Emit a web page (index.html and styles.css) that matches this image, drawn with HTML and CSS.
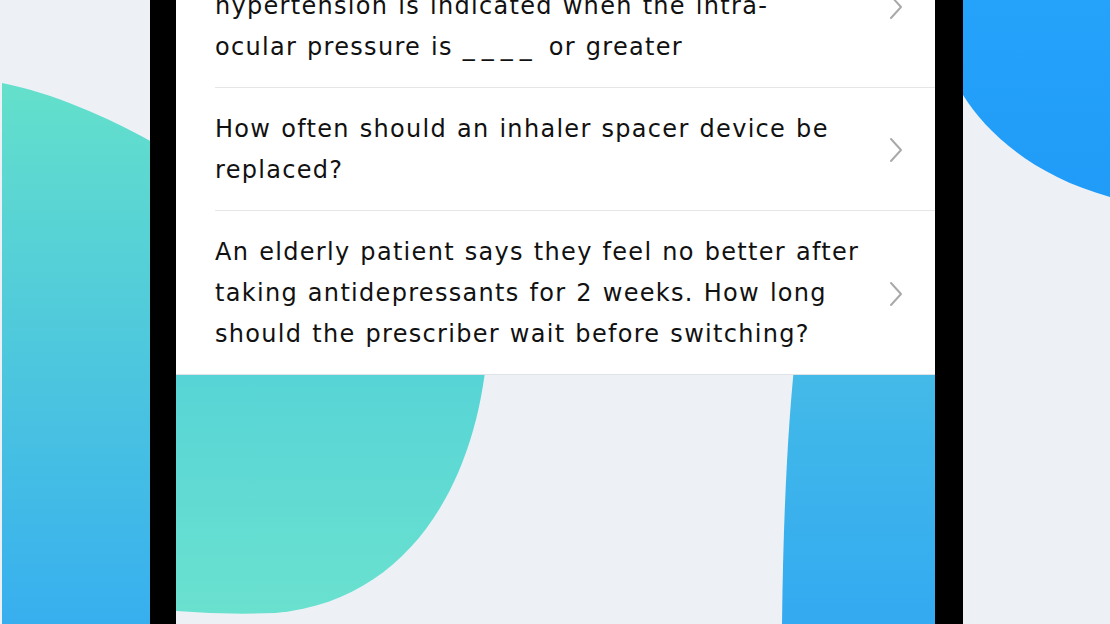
FILE: index.html
```html
<!DOCTYPE html>
<html lang="en">
<head>
<meta charset="utf-8">
<title>Questions</title>
<link rel="stylesheet" href="styles.css">
</head>
<body>
<div class="stage">
  <svg class="backdrop" viewBox="0 0 1110 624" preserveAspectRatio="none" aria-hidden="true">
    <defs>
      <linearGradient id="gLeft" x1="0" y1="83" x2="0" y2="624" gradientUnits="userSpaceOnUse">
        <stop offset="0" stop-color="#64e0cb"/>
        <stop offset="1" stop-color="#37afef"/>
      </linearGradient>
      <linearGradient id="gRight" x1="0" y1="0" x2="0" y2="200" gradientUnits="userSpaceOnUse">
        <stop offset="0" stop-color="#25a2fa"/>
        <stop offset="1" stop-color="#209cf8"/>
      </linearGradient>
    </defs>
    <path d="M2 83 C 50 92, 110 118, 152 142 V624 H2 Z" fill="url(#gLeft)"/>
    <path d="M963 0 V95 C 985 130, 1030 175, 1110 197 V0 Z" fill="url(#gRight)"/>
  </svg>

  <div class="phone">
    <div class="screen">
      <svg class="screen-art" viewBox="0 0 759 624" preserveAspectRatio="none" aria-hidden="true">
        <defs>
          <linearGradient id="gTeal" x1="0" y1="374" x2="0" y2="613" gradientUnits="userSpaceOnUse">
            <stop offset="0" stop-color="#57d4d6"/>
            <stop offset="1" stop-color="#6ae1cf"/>
          </linearGradient>
          <linearGradient id="gBlue" x1="0" y1="374" x2="0" y2="624" gradientUnits="userSpaceOnUse">
            <stop offset="0" stop-color="#43bae7"/>
            <stop offset="1" stop-color="#33aaf1"/>
          </linearGradient>
        </defs>
        <path d="M0 340 H312 C 304 475, 238 600, 100 613 Q 50 615, 0 611 Z" fill="url(#gTeal)"/>
        <path d="M621 340 Q 608 450, 606 624 H759 V340 Z" fill="url(#gBlue)"/>
      </svg>

      <ul class="questions">
        <li class="question">
          <p class="question-text">In the diagnosis of glaucoma, ocular<br>hypertension is indicated when the intra-<br>ocular pressure is <span class="blank">____</span> or greater</p>
          <svg class="chevron" viewBox="0 0 14 26" aria-hidden="true"><path d="M2 2 L12 13 L2 24"/></svg>
        </li>
        <li class="question">
          <p class="question-text">How often should an inhaler spacer device be replaced?</p>
          <svg class="chevron" viewBox="0 0 14 26" aria-hidden="true"><path d="M2 2 L12 13 L2 24"/></svg>
        </li>
        <li class="question">
          <p class="question-text">An elderly patient says they feel no better after taking antidepressants for 2 weeks. How long should the prescriber wait before switching?</p>
          <svg class="chevron" viewBox="0 0 14 26" aria-hidden="true"><path d="M2 2 L12 13 L2 24"/></svg>
        </li>
      </ul>
    </div>
  </div>
</div>
</body>
</html>
```

FILE: styles.css
```css
* {
  box-sizing: border-box;
}

html, body {
  margin: 0;
  padding: 0;
}

body {
  width: 1110px;
  height: 624px;
  overflow: hidden;
  background: #edf1f6;
  font-family: "DejaVu Sans", "Noto Sans", sans-serif;
}

.stage {
  position: relative;
  width: 1110px;
  height: 624px;
  overflow: hidden;
}

.backdrop {
  position: absolute;
  left: 0;
  top: 0;
  width: 1110px;
  height: 624px;
}

.phone {
  position: relative;
  margin-left: 150px;
  width: 813px;
  height: 624px;
  border-left: 26px solid #000;
  border-right: 28px solid #000;
}

.screen {
  position: relative;
  width: 100%;
  height: 100%;
  overflow: hidden;
  background: #edf1f6;
}

.screen-art {
  position: absolute;
  left: 0;
  top: 0;
  width: 759px;
  height: 624px;
}

.questions {
  position: relative;
  list-style: none;
  margin: -76px 0 0 0;
  padding: 0;
  background: #fff;
  border-bottom: 1px solid #dfe3e8;
}

.question {
  display: flex;
  align-items: center;
  gap: 16px;
  margin-left: 39px;
  padding: 21px 32px 19px 0;
  border-bottom: 1px solid #e6e6e6;
}

.question:last-child {
  border-bottom: none;
}

.question-text {
  flex: 1;
  margin: 0;
  font-size: 24px;
  line-height: 41px;
  color: #111;
  letter-spacing: 1.3px;
  word-spacing: 1px;
}

.blank {
  letter-spacing: 7px;
}

.chevron {
  flex: none;
  width: 14px;
  height: 26px;
  fill: none;
  stroke: #a9a9a9;
  stroke-width: 2;
  stroke-linecap: round;
  stroke-linejoin: round;
}
```
